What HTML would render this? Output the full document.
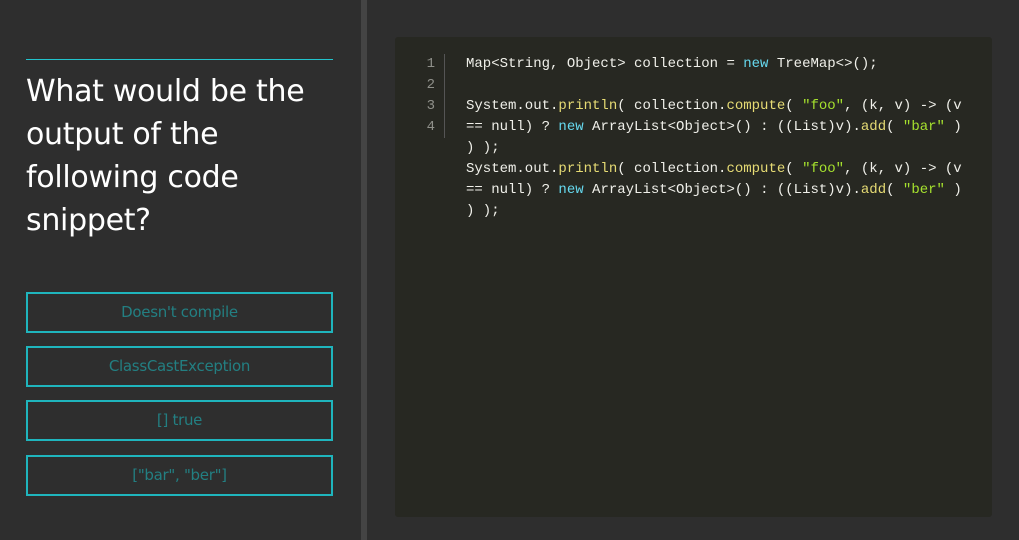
<!DOCTYPE html>
<html><head><meta charset="utf-8">
<style>
html,body{margin:0;padding:0;}
body{width:1019px;height:540px;background:#2e2e2e;position:relative;overflow:hidden;font-family:"Liberation Sans",sans-serif;}
.divider{position:absolute;left:361px;top:0;width:6px;height:540px;background:#444;}
.rule{position:absolute;left:26px;top:59px;width:307px;height:1px;background:#22c3cc;}
h1{position:absolute;left:26px;top:70px;width:320px;margin:0;font-weight:normal;color:#fff;font-size:30px;line-height:43px;font-family:"DejaVu Sans","Liberation Sans",sans-serif;letter-spacing:-0.3px;}
.btn{position:absolute;left:26px;width:303px;height:37px;border:2px solid #1fb5bd;color:#237f82;font-size:15px;line-height:37px;text-align:center;font-family:"DejaVu Sans",sans-serif;letter-spacing:-0.3px;}
.code{position:absolute;left:395px;top:37px;width:597px;height:480px;background:#272822;border-radius:3px;}
.ln{position:absolute;left:0;top:17px;width:40px;text-align:right;color:#8f908a;font:14px/21px "Liberation Mono",monospace;}
.gut{position:absolute;left:49px;top:17px;width:1px;height:84px;background:#555;}
pre{position:absolute;left:71px;top:17px;margin:0;color:#f0f0ea;font:14px/21px "Liberation Mono",monospace;}
.k{color:#66d9ef}.f{color:#e6db74}.s{color:#a6e22e}
</style></head><body>
<div class="divider"></div>
<div class="rule"></div>
<h1>What would be the output of the following code snippet?</h1>
<div class="btn" style="top:292px">Doesn't compile</div>
<div class="btn" style="top:346px">ClassCastException</div>
<div class="btn" style="top:400px">[] true</div>
<div class="btn" style="top:455px">["bar", "ber"]</div>
<div class="code">
<div class="ln">1<br>2<br>3<br>4</div>
<div class="gut"></div>
<pre>Map&lt;String, Object&gt; collection = <span class="k">new</span> TreeMap&lt;&gt;();

System.out.<span class="f">println</span>( collection.<span class="f">compute</span>( <span class="s">"foo"</span>, (k, v) -&gt; (v
== null) ? <span class="k">new</span> ArrayList&lt;Object&gt;() : ((List)v).<span class="f">add</span>( <span class="s">"bar"</span> )
) );
System.out.<span class="f">println</span>( collection.<span class="f">compute</span>( <span class="s">"foo"</span>, (k, v) -&gt; (v
== null) ? <span class="k">new</span> ArrayList&lt;Object&gt;() : ((List)v).<span class="f">add</span>( <span class="s">"ber"</span> )
) );</pre>
</div>
</body></html>
